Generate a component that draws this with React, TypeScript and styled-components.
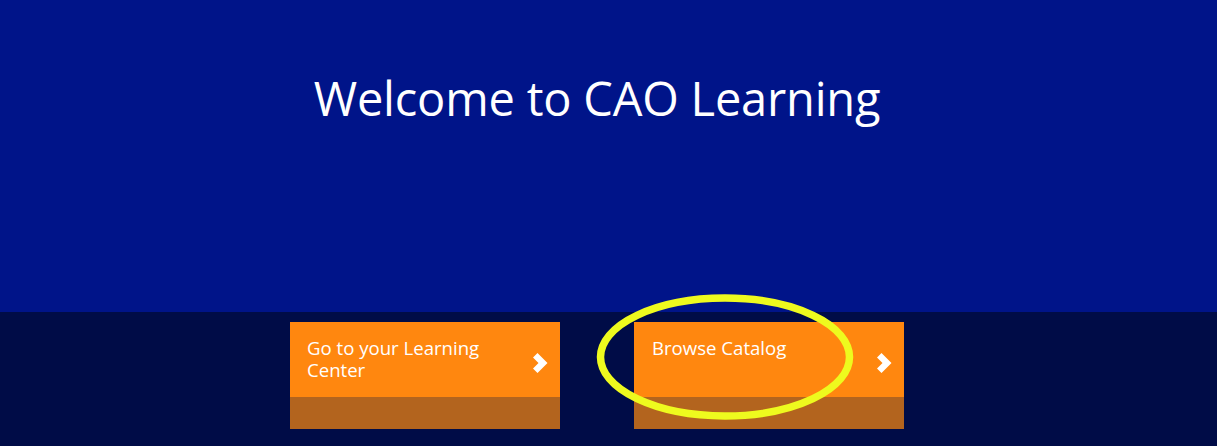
import React from "react";
import styled, { createGlobalStyle } from "styled-components";

const Global = createGlobalStyle`
  html, body { margin: 0; padding: 0; }
  body {
    font-family: "Open Sans", "Noto Sans", "Liberation Sans", sans-serif;
    background: #000c47;
    overflow: hidden;
  }
`;

const Page = styled.div`
  width: 1217px;
  height: 446px;
  display: flex;
  flex-direction: column;
`;

const Hero = styled.section`
  height: 312px;
  background: #001489;
  padding-right: 23px;
  display: flex;
  justify-content: center;
  align-items: flex-start;
  box-sizing: border-box;
`;

const Title = styled.h1`
  margin: 66px 0 0;
  font-size: 47px;
  font-weight: 400;
  line-height: 1.362;
  color: #ffffff;
  letter-spacing: -0.2px;
`;

const Actions = styled.section`
  flex: 1;
  background: #000c47;
  padding: 10px 23px 0 0;
  display: flex;
  justify-content: center;
  gap: 74px;
  box-sizing: border-box;
`;

const Card = styled.a`
  position: relative;
  width: 270px;
  height: 107px;
  display: flex;
  flex-direction: column;
  text-decoration: none;
  cursor: pointer;
`;

const CardTop = styled.div`
  height: 75px;
  background: #ff870f;
  display: flex;
  align-items: flex-start;
  justify-content: space-between;
  padding: 15px 12px 0 17px;
  box-sizing: border-box;
`;

const CardLabel = styled.span<{ $indent?: number }>`
  color: #ffffff;
  font-size: 18.6px;
  line-height: 22px;
  max-width: 200px;
  padding-left: ${(p) => p.$indent ?? 0}px;
`;

const CardBottom = styled.div`
  height: 32px;
  background: #b3641e;
`;

const Chevron = styled.svg`
  flex: none;
  width: 15px;
  height: 20px;
  margin-top: 16px;
`;

const Highlight = styled.svg`
  position: absolute;
  left: -50px;
  top: -40px;
  width: 290px;
  height: 150px;
  pointer-events: none;
  overflow: visible;
`;

const ChevronIcon = () => (
  <Chevron viewBox="0 0 15 20">
    <polygon points="0,4.5 4.5,0 14.5,10 4.5,20 0,15.5 5.5,10" fill="#ffffff" />
  </Chevron>
);

export default function App() {
  return (
    <>
      <Global />
      <Page>
        <Hero>
          <Title>Welcome to CAO Learning</Title>
        </Hero>
        <Actions>
          <Card>
            <CardTop>
              <CardLabel>Go to your Learning Center</CardLabel>
              <ChevronIcon />
            </CardTop>
            <CardBottom />
          </Card>
          <Card>
            <CardTop>
              <CardLabel $indent={1}>Browse Catalog</CardLabel>
              <ChevronIcon />
            </CardTop>
            <CardBottom />
            <Highlight viewBox="0 0 290 150">
              <ellipse
                cx="141"
                cy="75"
                rx="124.5"
                ry="59"
                fill="none"
                stroke="#eefa1e"
                strokeWidth="7.5"
              />
            </Highlight>
          </Card>
        </Actions>
      </Page>
    </>
  );
}
